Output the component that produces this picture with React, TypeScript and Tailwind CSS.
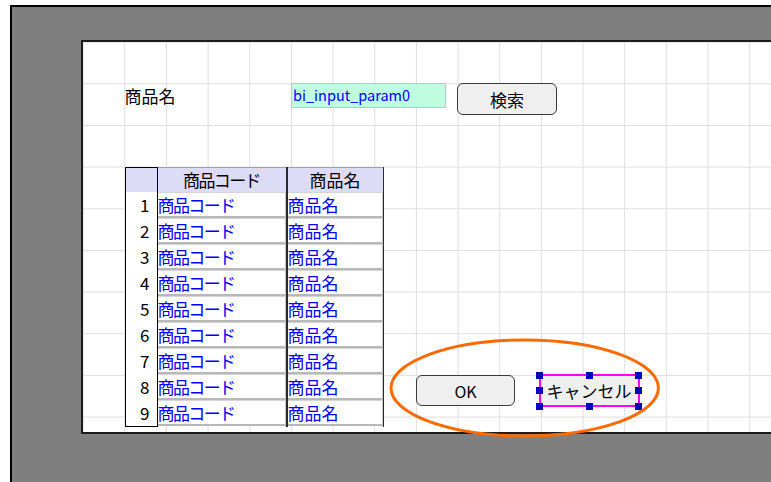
import React from "react";

const rows = [1, 2, 3, 4, 5, 6, 7, 8, 9];

function Handle({ cls }: { cls: string }) {
  return <div className={`absolute h-[7px] w-[7px] bg-[#0000c0] ${cls}`} />;
}

function DataCell({ text, narrow }: { text: string; narrow?: boolean }) {
  return (
    <div
      className={`flex h-[26px] items-center border-b-2 border-r border-t border-b-[#b8b8b8] border-r-[#c8c8c8] border-t-[#d4d4d4] bg-white text-[17px] leading-none text-[#0000ff] ${
        narrow ? "tracking-[-1.6px]" : ""
      }`}
    >
      {text}
    </div>
  );
}

export default function App() {
  return (
    <div className="relative h-[482px] w-[771px] overflow-hidden bg-white pl-[10px] pt-[5px] font-['Noto_Sans_CJK_JP',sans-serif] text-black">
      <div className="h-[477px] border-l-2 border-t-2 border-black bg-[#7f7f7f] pl-[69px] pt-[33px]">
        <div className="flex h-[394px] flex-col border-b-2 border-l-2 border-t-2 border-[#1c1c1c] bg-white bg-[linear-gradient(to_right,#dedede_1px,transparent_1px),linear-gradient(to_bottom,#dedede_1px,transparent_1px)] bg-[size:41.67px_41.67px] bg-[position:41.3px_41.3px] pl-[41.5px] pt-[41px]">
          {/* search row */}
          <div className="flex h-[32px] items-start">
            <div className="flex h-[25px] w-[166.5px] items-center text-[17px] leading-none">商品名</div>
            <div className="flex h-[25px] w-[155px] items-center border border-[#c4c4c4] bg-[#c0fde0] pl-px text-[14.5px] leading-none text-[#0000ff]">
              bi_input_param0
            </div>
            <button className="ml-[11px] flex h-[32px] w-[100px] items-center justify-center rounded-[6px] border border-[#3a3a3a] bg-[#efefef] text-[17px] leading-none">
              検索
            </button>
          </div>

          {/* table + buttons */}
          <div className="mt-[51.5px] flex items-start">
            <div className="flex">
              <div className="w-[33px] border border-black bg-white">
                <div className="h-[24px] bg-[#dcdcf7]" />
                {rows.map((n) => (
                  <div key={n} className="flex h-[26px] items-center justify-end pr-[7px] text-[17px] leading-none">
                    {n}
                  </div>
                ))}
              </div>
              <div className="w-[129px] border-r border-[#2a2a2a]">
                <div className="flex h-[25px] items-center justify-center border-t border-[#a0a0a0] bg-[#dcdcf7] text-[17px] leading-none tracking-[-1.6px]">
                  商品コード
                </div>
                {rows.map((n) => (
                  <DataCell key={n} text="商品コード" narrow />
                ))}
              </div>
              <div className="w-[97px] border-l border-r border-[#2a2a2a]">
                <div className="flex h-[25px] items-center justify-center border-t border-[#a0a0a0] bg-[#dcdcf7] text-[17px] leading-none">
                  商品名
                </div>
                {rows.map((n) => (
                  <DataCell key={n} text="商品名" />
                ))}
              </div>
            </div>

            <div className="ml-[32.5px] mt-[207.5px] flex items-center gap-[23.5px]">
              <button className="flex h-[31px] w-[99px] items-center justify-center rounded-[6px] border border-[#3a3a3a] bg-[#efefef] text-[16px] leading-none">
                OK
              </button>
              <div className="relative h-[33px] w-[101px]">
                <button className="flex h-full w-full items-center justify-center border-2 border-[#ff00ff] bg-[#efefef] text-[17px] leading-none">
                  キャンセル
                </button>
                <Handle cls="-left-[2.5px] -top-[2.5px]" />
                <Handle cls="left-[47px] -top-[2.5px]" />
                <Handle cls="left-[96.5px] -top-[2.5px]" />
                <Handle cls="-left-[2.5px] top-[13px]" />
                <Handle cls="left-[96.5px] top-[13px]" />
                <Handle cls="-left-[2.5px] top-[28.8px]" />
                <Handle cls="left-[47px] top-[28.8px]" />
                <Handle cls="left-[96.5px] top-[28.8px]" />
              </div>
            </div>
          </div>
        </div>
      </div>

      {/* annotation ellipse */}
      <svg className="absolute left-[386px] top-[336px]" width="280" height="106" viewBox="0 0 280 106">
        <ellipse cx="138.7" cy="52" rx="133.7" ry="48" fill="none" stroke="#ff6a00" strokeWidth="3" />
      </svg>
    </div>
  );
}
